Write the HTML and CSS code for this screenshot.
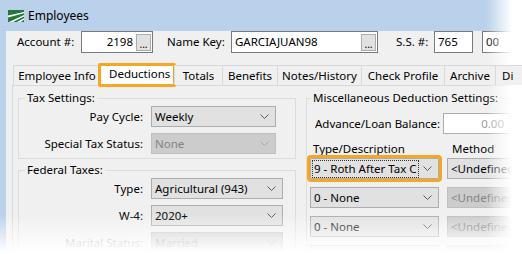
FILE: index.html
```html
<!DOCTYPE html>
<html lang="en">
<head>
    <meta charset="UTF-8">
    <title>Employees</title>
    <link rel="stylesheet" href="styles.css">
</head>
<body>
    <div class="window">
        <div class="titlebar">
            <svg class="app-icon" width="16" height="12" viewBox="0 0 16 12">
                <rect width="16" height="12" fill="#22793b"/>
                <path d="M0 5.5 L16 2 L16 3.2 L0 7.5Z" fill="#fff"/>
                <path d="M1 12 L16 5 L16 6.4 L5 12Z" fill="#fff"/>
                <path d="M9 12 L16 8.2 L16 9.8 L12.5 12Z" fill="#fff"/>
            </svg>
            <span class="title">Employees</span>
        </div>

        <div class="client">
            <!-- Header fields -->
            <div class="header">
                <span class="hdr-label lbl-account">Account #:</span>
                <div class="textbox tb-account">
                    <span class="tb-text right">2198</span>
                    <span class="browse">...</span>
                </div>
                <span class="hdr-label lbl-namekey">Name Key:</span>
                <div class="textbox tb-namekey">
                    <span class="tb-text">GARCIAJUAN98</span>
                    <span class="browse">...</span>
                </div>
                <span class="hdr-label lbl-ss">S.S. #:</span>
                <div class="textbox tb-ss1"><span class="tb-text">765</span></div>
                <div class="textbox tb-ss2"><span class="tb-text">00</span></div>
            </div>

            <!-- Tabs -->
            <div class="tabs">
                <div class="tab t-info">Employee Info</div>
                <div class="tab t-deductions selected">Deductions</div>
                <div class="tab t-totals">Totals</div>
                <div class="tab t-benefits">Benefits</div>
                <div class="tab t-notes">Notes/History</div>
                <div class="tab t-check">Check Profile</div>
                <div class="tab t-archive">Archive</div>
                <div class="tab t-more">Di</div>
            </div>

            <div class="tab-page">
                <div class="col-left">
                    <fieldset class="group group-tax">
                        <legend>Tax Settings:</legend>
                        <div class="form-grid">
                            <span class="form-label">Pay Cycle:</span>
                            <div class="select">
                                <span>Weekly</span>
                                <svg class="chev" width="9" height="5"><polyline points="0.5,0.5 4.5,4.5 8.5,0.5"/></svg>
                            </div>
                            <span class="form-label">Special Tax Status:</span>
                            <div class="select disabled">
                                <span>None</span>
                                <svg class="chev" width="9" height="5"><polyline points="0.5,0.5 4.5,4.5 8.5,0.5"/></svg>
                            </div>
                        </div>
                    </fieldset>

                    <fieldset class="group group-federal">
                        <legend>Federal Taxes:</legend>
                        <div class="form-grid wide">
                            <span class="form-label">Type:</span>
                            <div class="select">
                                <span>Agricultural (943)</span>
                                <svg class="chev" width="9" height="5"><polyline points="0.5,0.5 4.5,4.5 8.5,0.5"/></svg>
                            </div>
                            <span class="form-label">W-4:</span>
                            <div class="select">
                                <span>2020+</span>
                                <svg class="chev" width="9" height="5"><polyline points="0.5,0.5 4.5,4.5 8.5,0.5"/></svg>
                            </div>
                            <span class="form-label muted">Marital Status:</span>
                            <div class="select disabled">
                                <span>Married</span>
                                <svg class="chev" width="9" height="5"><polyline points="0.5,0.5 4.5,4.5 8.5,0.5"/></svg>
                            </div>
                        </div>
                    </fieldset>
                </div>

                <div class="col-right">
                    <fieldset class="group group-misc">
                        <legend>Miscellaneous Deduction Settings:</legend>
                        <div class="adv-row">
                            <span class="adv-label">Advance/Loan Balance:</span>
                            <div class="textbox tb-adv"><span class="tb-text right muted">0.00</span></div>
                        </div>

                        <div class="col-heads">
                            <span>Type/Description</span>
                            <span>Method</span>
                        </div>

                        <div class="deduction-grid">
                            <div class="select focused">
                                <span class="focus-text">9 - Roth After Tax C</span>
                                <svg class="chev" width="9" height="5"><polyline points="0.5,0.5 4.5,4.5 8.5,0.5"/></svg>
                            </div>
                            <div class="select">
                                <span>&lt;Undefined&gt;</span>
                                <svg class="chev" width="9" height="5"><polyline points="0.5,0.5 4.5,4.5 8.5,0.5"/></svg>
                            </div>

                            <div class="select">
                                <span>0 - None</span>
                                <svg class="chev" width="9" height="5"><polyline points="0.5,0.5 4.5,4.5 8.5,0.5"/></svg>
                            </div>
                            <div class="select disabled">
                                <span>&lt;Undefined&gt;</span>
                                <svg class="chev" width="9" height="5"><polyline points="0.5,0.5 4.5,4.5 8.5,0.5"/></svg>
                            </div>

                            <div class="select">
                                <span>0 - None</span>
                                <svg class="chev" width="9" height="5"><polyline points="0.5,0.5 4.5,4.5 8.5,0.5"/></svg>
                            </div>
                            <div class="select disabled">
                                <span>&lt;Undefined&gt;</span>
                                <svg class="chev" width="9" height="5"><polyline points="0.5,0.5 4.5,4.5 8.5,0.5"/></svg>
                            </div>

                            <!-- next row, only its top edge shows -->
                            <div class="select"></div>
                            <div class="select disabled"></div>
                        </div>
                    </fieldset>
                </div>
            </div>
        </div>

        <!-- soft fade of the screenshot edges -->
        <div class="fade"></div>
    </div>
</body>
</html>
```

FILE: styles.css
```css
/* General Reset */
* {
    margin: 0;
    padding: 0;
    box-sizing: border-box;
}

html,
body {
    overflow: hidden;
}

body {
    width: 522px;
    height: 254px;
    background: #fff;
    font-family: "Noto Sans", "Open Sans", sans-serif;
    font-size: 11.5px;
    line-height: 14px;
    color: #000;
}

.window {
    position: relative;
    width: 580px;
    height: 254px;
    background: #b9d1ea;
    padding-left: 6px;
}

/* Title bar */
.titlebar {
    height: 28px;
    display: flex;
    align-items: center;
    gap: 4px;
    padding: 3px 0 0 2px;
}

.title {
    font-size: 12px;
}

.client {
    height: 226px;
    background: #f0f0f0;
}

/* Header fields */
.header {
    display: flex;
    align-items: center;
    height: 22px;
    margin-top: 3px;
    padding-left: 11px;
}

.hdr-label {
    flex: none;
}

.lbl-account,
.lbl-namekey {
    width: 64px;
}

.lbl-ss {
    width: 38px;
}

.textbox {
    flex: none;
    display: flex;
    align-items: center;
    height: 22px;
    padding: 0 1px 0 3px;
    background: #fff;
    border: 1px solid #7a7a7a;
}

.tb-text {
    flex: 1;
    white-space: nowrap;
}

.tb-text.right {
    text-align: right;
    padding-right: 3px;
}

.tb-account {
    width: 72px;
    margin-right: 14px;
}

.tb-namekey {
    width: 147px;
    margin-right: 18px;
}

.tb-ss1 {
    width: 39px;
    margin-right: 9px;
}

.tb-ss2 {
    width: 60px;
}

.browse {
    flex: none;
    width: 15px;
    height: 17px;
    display: flex;
    align-items: flex-end;
    justify-content: center;
    font-size: 10px;
    line-height: 12px;
    background: #e1e1e1;
    border: 1px solid #adadad;
}

/* Tabs */
.tabs {
    position: relative;
    z-index: 1;
    display: flex;
    align-items: flex-end;
    height: 24px;
    margin: 10px 0 -2px;
    padding-left: 7px;
}

.tab {
    flex: none;
    height: 20px;
    margin-bottom: 2px;
    line-height: 19px;
    text-align: center;
    white-space: nowrap;
    background: #f0f0f0;
    border: 1px solid #d9d9d9;
    border-right: none;
    border-bottom: none;
}

.tab.selected {
    height: 24px;
    margin: 0 -2px;
    padding-left: 8px;
    line-height: 15px;
    text-align: left;
    background: #fff;
    border: 3px solid #f5a623;
    border-radius: 2px;
}

.t-info { width: 87px; }
.t-deductions { width: 78px; }
.t-totals { width: 48px; }
.t-benefits { width: 55px; }
.t-notes { width: 84px; }
.t-check { width: 83px; }
.t-archive { width: 51px; }

.t-more {
    width: 90px;
    padding-left: 6px;
    text-align: left;
    border-right: 1px solid #d9d9d9;
}

.tab-page {
    display: flex;
    height: 200px;
    margin-left: 6px;
    padding: 4px 0 0 5px;
    background: #f0f0f0;
    border: 1px solid #d9d9d9;
}

/* Group boxes */
.group {
    min-width: 0;
    padding: 0 0 4px;
    border: 1px solid #dcdcdc;
}

.group legend {
    margin-left: 6px;
    padding: 0 2px;
    line-height: 16px;
}

.col-left {
    width: 278px;
    flex: none;
}

.col-right {
    width: 260px;
    flex: none;
    margin-left: 10px;
}

.group-federal {
    margin-top: 3px;
    height: 120px;
}

.form-grid {
    display: grid;
    grid-template-columns: 124px 125px;
    column-gap: 8px;
    row-gap: 6px;
    align-items: center;
}

.form-grid.wide {
    grid-template-columns: 124px 132px;
}

.form-label {
    text-align: right;
    white-space: nowrap;
}

.muted {
    color: #9a9a9a;
}

/* Dropdowns */
.select {
    display: flex;
    align-items: center;
    justify-content: space-between;
    height: 21px;
    padding-left: 3px;
    white-space: nowrap;
    overflow: hidden;
    background: #e1e1e1;
    border: 1px solid #adadad;
}

.select .chev {
    flex: none;
    margin: 0 6px;
    fill: none;
    stroke: #5a5a5a;
    stroke-width: 1;
}

.select.disabled {
    color: #838383;
    background: #cccccc;
    border-color: #bfbfbf;
}

.select.disabled .chev {
    stroke: #a6a6a6;
}

.select.focused {
    outline: 3px solid #f5a623;
    border-radius: 1px;
}

.focus-text {
    outline: 1px dotted #333;
    outline-offset: 1px;
}

/* Misc deductions */
.group-misc {
    height: 200px;
}

.group-misc legend {
    margin-left: 4px;
}

.adv-row {
    display: flex;
    align-items: center;
    margin-top: 7px;
    padding-left: 8px;
}

.adv-label {
    width: 128px;
    flex: none;
    white-space: nowrap;
}

.tb-adv {
    width: 80px;
    height: 21px;
    border-color: #adadad;
}

.tb-adv .tb-text.right {
    padding-right: 17px;
}

.col-heads {
    display: grid;
    grid-template-columns: 137px 100px;
    margin-top: 8px;
    padding-left: 6px;
}

.col-heads span:last-child {
    padding-left: 2px;
}

.deduction-grid {
    display: grid;
    grid-template-columns: 129px 100px;
    column-gap: 8px;
    row-gap: 8px;
    margin-top: 2px;
    padding-left: 3px;
}

/* Edge fade over the whole picture */
.fade {
    position: absolute;
    top: 0;
    left: 0;
    width: 522px;
    height: 254px;
    pointer-events: none;
    background:
        linear-gradient(to right, rgba(255, 255, 255, 0) 486px, #fff 512px),
        linear-gradient(to bottom, rgba(255, 255, 255, 0) 214px, #fff 252px);
}
```
